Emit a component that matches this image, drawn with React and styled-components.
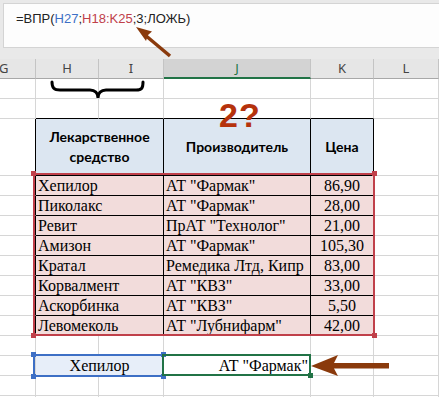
import React from 'react';
import styled, { createGlobalStyle } from 'styled-components';

const GlobalStyle = createGlobalStyle`
  html, body {
    margin: 0;
    padding: 0;
    background: #e9e9e9;
    overflow: hidden;
  }
`;

const BLUE = '#3d6fc5';
const RED = '#c0404a';
const GREEN = '#217346';
const BROWN = '#8a3a0c';
const GRID = '#d6d6d6';

const Page = styled.div`
  position: relative;
  width: 439px;
  height: 397px;
  overflow: hidden;
`;

const FormulaBar = styled.div`
  height: 59px;
  padding: 3px 0 0 3px;
  box-sizing: border-box;
`;

const FormulaBox = styled.div`
  height: 45px;
  background: #fdfdfd;
  border: 1px solid #d4d4d4;
  border-right: none;
  box-sizing: border-box;
  padding: 7px 0 0 12px;
  font-family: "Liberation Sans", Arial, sans-serif;
  font-size: 13px;
  color: #222;
`;

const Ref = styled.span`
  color: ${p => p.$color};
`;

const Sheet = styled.div`
  position: relative;
  display: grid;
  grid-template-columns: 36px 63px 65px 147px 63px 65px;
  grid-template-rows: repeat(3, 20px) 57px repeat(12, 20px);
  background: #fff;
`;

const ColHead = styled.div`
  box-sizing: border-box;
  background: ${p => (p.$active ? '#d3d3d3' : '#e6e6e6')};
  border-right: 1px solid #c4c4c4;
  border-bottom: ${p => (p.$active ? `2px solid ${GREEN}` : '1px solid #a8a8a8')};
  font-family: "Noto Sans", "Open Sans", sans-serif;
  font-size: 13px;
  line-height: 19px;
  color: ${p => (p.$active ? GREEN : '#444')};
  text-align: center;
  overflow: hidden;
  ${p => p.$cut && 'text-align: left; text-indent: -1px;'}
`;

const Cell = styled.div`
  box-sizing: border-box;
  grid-column: span ${p => p.$span || 1};
  background: ${p => p.$bg || '#fff'};
  border-right: 1px solid ${p => p.$right || GRID};
  border-bottom: 1px solid ${p => p.$bottom || GRID};
  font-family: "Liberation Serif", "Times New Roman", serif;
  font-size: 16px;
  line-height: 20px;
  color: #000;
  padding: 0 2px;
  white-space: nowrap;
  text-align: ${p => p.$align || 'left'};
`;

const HeadCell = styled(Cell)`
  display: flex;
  align-items: center;
  justify-content: center;
  text-align: center;
  white-space: normal;
  font-family: Lato, "Liberation Sans", sans-serif;
  font-weight: 700;
  font-size: 14px;
  line-height: 20px;
  background: #dce6f1;
  padding: 0 8px;
`;

const Range = styled.div`
  position: absolute;
  left: ${p => p.$x}px;
  top: ${p => p.$y}px;
  width: ${p => p.$w}px;
  height: ${p => p.$h}px;
  box-sizing: border-box;
  border: 2px solid ${p => p.$color};
  pointer-events: none;
`;

const Handle = styled.span`
  position: absolute;
  width: 5px;
  height: 5px;
  background: ${p => p.$color};
  ${p => (p.$top ? 'top: -4px;' : 'bottom: -4px;')}
  ${p => (p.$left ? 'left: -4px;' : 'right: -4px;')}
`;

const Mark = styled.div`
  position: absolute;
  left: 219px;
  top: 39px;
  font-family: "Liberation Sans", Arial, sans-serif;
  font-weight: 700;
  font-size: 34px;
  line-height: 34px;
  color: #b5320c;
  letter-spacing: 1px;
`;

const Drawing = styled.svg`
  position: absolute;
  left: 0;
  top: 0;
  overflow: visible;
  pointer-events: none;
`;

const columns = ['G', 'H', 'I', 'J', 'K', 'L'];

const drugs = [
  ['Хепилор', 'АТ "Фармак"', '86,90'],
  ['Пиколакс', 'АТ "Фармак"', '28,00'],
  ['Ревит', 'ПрАТ "Технолог"', '21,00'],
  ['Амизон', 'АТ "Фармак"', '105,30'],
  ['Кратал', 'Ремедика Лтд, Кипр', '83,00'],
  ['Корвалмент', 'АТ "КВЗ"', '33,00'],
  ['Аскорбинка', 'АТ "КВЗ"', '5,50'],
  ['Левомеколь', 'АТ "Лубнифарм"', '42,00'],
];

const EmptyRow = ({ above }) => (
  <>
    <Cell />
    <Cell $bottom={above ? '#000' : GRID} />
    <Cell $bottom={above ? '#000' : GRID} />
    <Cell $bottom={above ? '#000' : GRID} />
    <Cell $bottom={above ? '#000' : GRID} />
    <Cell />
  </>
);

const Corners = ({ color, only }) =>
  [
    [true, true],
    [true, false],
    [false, true],
    [false, false],
  ]
    .filter(([t, l]) => !only || (t === only[0] && l === only[1]))
    .map(([t, l]) => <Handle key={`${t}${l}`} $color={color} $top={t} $left={l} />);

export default function App() {
  return (
    <Page>
      <GlobalStyle />
      <FormulaBar>
        <FormulaBox>
          =ВПР(<Ref $color={BLUE}>H27</Ref>;<Ref $color={RED}>H18:K25</Ref>;3;ЛОЖЬ)
        </FormulaBox>
      </FormulaBar>

      <Sheet>
        {columns.map(c => (
          <ColHead key={c} $active={c === 'J'} $cut={c === 'G'}>
            {c}
          </ColHead>
        ))}

        <EmptyRow />
        <EmptyRow above />

        <Cell $right="#000" />
        <HeadCell $span={2} $right="#000" $bottom="#000">
          Лекарственное средство
        </HeadCell>
        <HeadCell $right="#000" $bottom="#000">
          Производитель
        </HeadCell>
        <HeadCell $right="#000" $bottom="#000">
          Цена
        </HeadCell>
        <Cell />

        {drugs.map(([name, maker, price]) => (
          <React.Fragment key={name}>
            <Cell $right="#000" />
            <Cell $span={2} $bg="#f2dcdb" $right="#000" $bottom="#000">
              {name}
            </Cell>
            <Cell $bg="#f2dcdb" $right="#000" $bottom="#000">
              {maker}
            </Cell>
            <Cell $bg="#f2dcdb" $right="#000" $bottom="#000" $align="center">
              {price}
            </Cell>
            <Cell />
          </React.Fragment>
        ))}

        <EmptyRow />

        <Cell />
        <Cell $span={2} $bg="#e7eef9" $align="center">
          Хепилор
        </Cell>
        <Cell $align="right">АТ "Фармак"</Cell>
        <Cell />
        <Cell />

        <EmptyRow />
        <EmptyRow />

        <Mark>2?</Mark>

        <Range $x={33} $y={114} $w={342} $h={163} $color={RED}>
          <Corners color={RED} />
        </Range>
        <Range $x={33} $y={295} $w={131} $h={23} $color={BLUE}>
          <Corners color={BLUE} />
        </Range>
        <Range $x={162} $y={295} $w={149} $h={22} $color={GREEN}>
          <Corners color={GREEN} only={[false, false]} />
        </Range>
      </Sheet>

      {/* curly brace over columns H:I, and the two pointer arrows */}
      <Drawing width="439" height="397">
        <path
          d="M52,82 C52,88 54,90 60,90 L90,90 C95,90 98,93 98,98 C98,93 101,90 106,90 L136,90 C142,90 143,88 143,82"
          fill="none"
          stroke="#000"
          strokeWidth="3"
          strokeLinecap="round"
        />
        <line x1="145" y1="35" x2="170" y2="56" stroke={BROWN} strokeWidth="3.5" />
        <polygon points="136,27 152,31.5 148,35 146,41" fill={BROWN} />
        <polygon
          points="311,366 338,355 334,363 389,363 389,368.5 334,368.5 338,376"
          fill={BROWN}
        />
      </Drawing>
    </Page>
  );
}
